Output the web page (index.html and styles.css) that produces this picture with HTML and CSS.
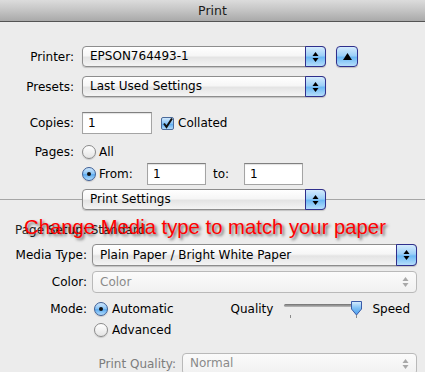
FILE: index.html
```html
<!DOCTYPE html>
<html lang="en">

<head>
    <meta charset="UTF-8">
    <meta name="viewport" content="width=device-width, initial-scale=1.0">
    <title>Print</title>
    <link rel="stylesheet" href="styles.css">
</head>

<body>
    <div class="titlebar">Print</div>

    <div class="sheet">
        <div class="row printer-row">
            <span class="label">Printer:</span>
            <div class="popup">
                <span class="value">EPSON764493-1</span>
                <span class="arrows"><svg width="7" height="12" viewBox="0 0 7 12"><path d="M3.5 1L6.5 5H0.5z M0.5 7H6.5L3.5 11z" fill="#000"/></svg></span>
            </div>
            <button class="disclosure" type="button"><svg width="9" height="7" viewBox="0 0 9 7"><path d="M4.5 0L9 7H0z" fill="#000"/></svg></button>
        </div>

        <div class="row presets-row">
            <span class="label">Presets:</span>
            <div class="popup">
                <span class="value">Last Used Settings</span>
                <span class="arrows"><svg width="7" height="12" viewBox="0 0 7 12"><path d="M3.5 1L6.5 5H0.5z M0.5 7H6.5L3.5 11z" fill="#000"/></svg></span>
            </div>
        </div>

        <div class="row copies-row">
            <span class="label">Copies:</span>
            <div class="field copies">1</div>
            <span class="checkbox"><svg width="11" height="11" viewBox="0 0 11 11"><path d="M2 5.5L4.5 9L10 0.5" fill="none" stroke="#111" stroke-width="2"/></svg></span>
            <span class="check-text">Collated</span>
        </div>

        <div class="row all-row">
            <span class="label">Pages:</span>
            <span class="radio"></span>
            <span class="radio-text">All</span>
        </div>

        <div class="row from-row">
            <span class="label"></span>
            <span class="radio on"></span>
            <span class="radio-text">From:</span>
            <div class="field page-field">1</div>
            <span class="to">to:</span>
            <div class="field page-field">1</div>
        </div>

        <div class="row divider-row">
            <span class="line left-line"></span>
            <div class="popup settings">
                <span class="value">Print Settings</span>
                <span class="arrows"><svg width="7" height="12" viewBox="0 0 7 12"><path d="M3.5 1L6.5 5H0.5z M0.5 7H6.5L3.5 11z" fill="#000"/></svg></span>
            </div>
            <span class="line"></span>
        </div>

        <div class="note">
            <span class="page-setup">Page Setup: Standard</span>
            <span class="callout">Change Media type to match your paper</span>
        </div>

        <div class="row media-row">
            <span class="label wide">Media Type:</span>
            <div class="popup">
                <span class="value">Plain Paper / Bright White Paper</span>
                <span class="arrows"><svg width="7" height="12" viewBox="0 0 7 12"><path d="M3.5 1L6.5 5H0.5z M0.5 7H6.5L3.5 11z" fill="#000"/></svg></span>
            </div>
        </div>

        <div class="row color-row">
            <span class="label wide">Color:</span>
            <div class="popup disabled">
                <span class="value">Color</span>
                <span class="arrows"><svg width="7" height="12" viewBox="0 0 7 12"><path d="M3.5 1L6.5 5H0.5z M0.5 7H6.5L3.5 11z" fill="#a8a8a8"/></svg></span>
            </div>
        </div>

        <div class="row mode-row">
            <span class="label wide">Mode:</span>
            <span class="radio on"></span>
            <span class="radio-text mode-text">Automatic</span>
            <span class="quality">Quality</span>
            <div class="slider">
                <span class="track"></span>
                <span class="tick first"></span>
                <span class="tick last"></span>
                <svg class="thumb" width="13" height="16" viewBox="0 0 13 16">
                    <defs>
                        <linearGradient id="thumbFill" x1="0" y1="0" x2="0" y2="1">
                            <stop offset="0" stop-color="#d9eefe"/>
                            <stop offset="0.5" stop-color="#7dbff4"/>
                            <stop offset="1" stop-color="#4a9ff0"/>
                        </linearGradient>
                    </defs>
                    <path d="M1.5 0.5H11.5V8L6.5 14L1.5 8z" fill="url(#thumbFill)" stroke="#3a5ba8"/>
                </svg>
            </div>
            <span class="speed">Speed</span>
        </div>

        <div class="row advanced-row">
            <span class="label wide"></span>
            <span class="radio"></span>
            <span class="radio-text mode-text">Advanced</span>
        </div>

        <div class="row quality-row">
            <span class="label quality-label">Print Quality:</span>
            <div class="popup disabled">
                <span class="value">Normal</span>
                <span class="arrows"><svg width="7" height="12" viewBox="0 0 7 12"><path d="M3.5 1L6.5 5H0.5z M0.5 7H6.5L3.5 11z" fill="#a8a8a8"/></svg></span>
            </div>
        </div>
    </div>
</body>

</html>
```

FILE: styles.css
```css
* {
    box-sizing: border-box;
}

body {
    font-family: "DejaVu Sans", sans-serif;
    font-size: 12px;
    color: #000;
    margin: 0;
    padding: 0;
    background-color: #ececec;
    overflow: hidden;
}

.titlebar {
    height: 22px;
    line-height: 22px;
    text-align: center;
    font-size: 12.5px;
    color: #1a1a1a;
    background: linear-gradient(#dcdcdc, #c4c4c4 50%, #a9a9a9);
    border-bottom: 1px solid #545454;
}

.sheet {
    display: flex;
    flex-direction: column;
}

.row {
    display: flex;
    align-items: center;
}

.label {
    width: 74px;
    margin-right: 8px;
    text-align: right;
    flex: none;
}

.label.wide {
    width: 87px;
    margin-right: 5px;
}

.label.quality-label {
    width: 176px;
    margin-right: 6px;
    color: #7d7d7d;
}

/* popup buttons */
.popup {
    display: flex;
    width: 244px;
    height: 21px;
    border: 1px solid #8d8d8d;
    border-radius: 4px;
    background: linear-gradient(#ffffff, #f6f6f6 45%, #e4e4e4 55%, #f4f4f4);
    box-shadow: 0 1px 1px rgba(0, 0, 0, 0.18);
}

.popup .value {
    flex: 1;
    padding-left: 7px;
    line-height: 19px;
    white-space: nowrap;
}

.popup .arrows {
    width: 21px;
    margin: -1px -1px -1px 0;
    display: flex;
    align-items: center;
    justify-content: center;
    border: 1px solid #2f2f8c;
    border-radius: 0 4px 4px 0;
    background: linear-gradient(#d4ebfd, #9dd0f8 45%, #6db9f4 55%, #b6defb);
}

.popup.disabled {
    border-color: #b9b9b9;
    background: linear-gradient(#fbfbfb, #f1f1f1);
    box-shadow: none;
}

.popup.disabled .value {
    color: #8a8a8a;
}

.popup.disabled .arrows {
    border: none;
    margin: 0;
    background: none;
}

.printer-row {
    margin-top: 24px;
}

.presets-row {
    margin-top: 9px;
}

.disclosure {
    width: 22px;
    height: 21px;
    margin-left: 10px;
    padding: 0;
    display: flex;
    align-items: center;
    justify-content: center;
    border: 1px solid #2f2f8c;
    border-radius: 4px;
    background: linear-gradient(#d4ebfd, #9dd0f8 45%, #6db9f4 55%, #b6defb);
    box-shadow: 0 1px 1px rgba(0, 0, 0, 0.2);
}

/* text fields */
.field {
    height: 22px;
    line-height: 20px;
    padding-left: 5px;
    background: #fff;
    border: 1px solid #a4a4a4;
    border-top-color: #808080;
    box-shadow: inset 0 1px 1px rgba(0, 0, 0, 0.12);
}

.copies-row {
    margin-top: 15px;
}

.field.copies {
    width: 70px;
}

.checkbox {
    width: 13px;
    height: 13px;
    margin-left: 9px;
    border: 1px solid #4a6a9a;
    border-radius: 2px;
    background: linear-gradient(#cfe7fc, #86c2f5 50%, #5cabf0 55%, #b2dbfb);
    display: flex;
    align-items: center;
    justify-content: center;
}

.check-text {
    margin-left: 4px;
}

.radio {
    width: 14px;
    height: 14px;
    border: 1px solid #8a8a8a;
    border-radius: 50%;
    background: linear-gradient(#ffffff, #e4e4e4);
    box-shadow: 0 1px 1px rgba(0, 0, 0, 0.15);
    display: flex;
    align-items: center;
    justify-content: center;
    flex: none;
}

.radio.on {
    border-color: #3d5e95;
    background: linear-gradient(#cfe7fc, #86c2f5 50%, #5cabf0 55%, #b2dbfb);
}

.radio.on::after {
    content: "";
    width: 4px;
    height: 4px;
    border-radius: 50%;
    background: #111;
}

.radio-text {
    margin-left: 3px;
}

.all-row {
    margin-top: 11px;
    height: 14px;
}

.from-row {
    margin-top: 4px;
}

.field.page-field {
    width: 59px;
}

.from-row .radio-text {
    width: 48px;
}

.to {
    width: 38px;
    padding-left: 7px;
}

/* divider with view menu */
.divider-row {
    margin-top: 4px;
}

.divider-row .line {
    flex: 1;
    height: 1px;
    background: #a6a6a6;
}

.divider-row .left-line {
    flex: none;
    width: 82px;
}

/* annotation over the panel */
.note {
    position: relative;
    height: 34px;
}

.page-setup {
    position: absolute;
    left: 15px;
    top: 13px;
    color: #222;
}

.callout {
    position: absolute;
    left: 24px;
    top: 6px;
    font-family: "Liberation Sans", Arial, sans-serif;
    font-size: 20.3px;
    color: #ff0000;
    white-space: nowrap;
    text-shadow: 2px 2px 3px rgba(0, 0, 0, 0.55);
}

.media-row .popup,
.color-row .popup {
    width: 325px;
    height: 22px;
}

.media-row .popup .value,
.color-row .popup .value {
    line-height: 20px;
}

.color-row {
    margin-top: 5px;
}

.mode-row {
    margin-top: 7px;
    height: 17px;
}

.mode-row .radio,
.advanced-row .radio {
    margin-left: 2px;
}

.mode-text {
    margin-left: 4px;
}

.quality {
    margin-left: 57px;
}

.slider {
    position: relative;
    width: 79px;
    height: 16px;
    margin-left: 11px;
}

.slider .track {
    position: absolute;
    left: 0;
    right: 4px;
    top: 3px;
    height: 3px;
    border-radius: 2px;
    background: linear-gradient(#6e6e6e, #bdbdbd);
}

.slider .tick {
    position: absolute;
    top: 14px;
    width: 1px;
    height: 3px;
    background: #8a8a8a;
}

.slider .tick.first {
    left: 6px;
}

.slider .tick.last {
    left: 72px;
}

.slider .thumb {
    position: absolute;
    left: 66px;
    top: 0;
}

.speed {
    margin-left: 9px;
}

.advanced-row {
    margin-top: 4px;
    height: 17px;
}

.quality-row {
    margin-top: 15px;
}

.quality-row .popup {
    width: 235px;
    height: 22px;
}
```
